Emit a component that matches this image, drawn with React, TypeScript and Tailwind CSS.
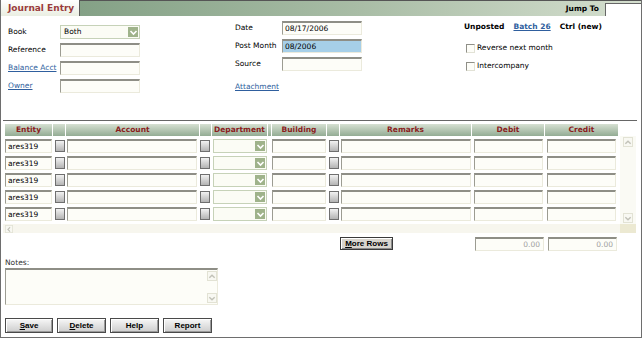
import React from "react";

const COLS = [48, 13, 134, 12, 56, 4, 55, 13, 132, 73, 73];
const HEADS = ["Entity", "", "Account", "", "Department", "", "Building", "", "Remarks", "Debit", "Credit"];

const boxCls =
  "h-[14px] border border-t-2 border-t-[#8e8e86] border-l-[#9c9c92] border-r-[#ebeadc] border-b-[#ebeadc] flex items-center pl-[2px] overflow-hidden whitespace-nowrap";

function Box({ className = "", bg = "bg-[#fdfdf8]", children }: { className?: string; bg?: string; children?: React.ReactNode }) {
  return <div className={`${boxCls} ${bg} ${className}`}>{children}</div>;
}

function Chevron({ dir = "down", color = "#ffffff" }: { dir?: "down" | "up" | "left" | "right"; color?: string }) {
  const pts = {
    down: "1.5,3 4.5,6 7.5,3",
    up: "1.5,6 4.5,3 7.5,6",
    left: "6,1.5 3,4.5 6,7.5",
    right: "3,1.5 6,4.5 3,7.5",
  }[dir];
  return (
    <svg width="9" height="9" viewBox="0 0 9 9">
      <polyline points={pts} fill="none" stroke={color} strokeWidth="1.6" />
    </svg>
  );
}

function Select({ className = "", value = "" }: { className?: string; value?: string }) {
  return (
    <div className={`h-[14px] flex border border-[#c6d2b8] bg-[#fbfcf5] ${className}`}>
      <div className="flex-1 flex items-center pl-[3px]">{value}</div>
      <div className="w-[10px] my-[1px] mr-[1px] bg-[#9fb38b] flex items-center justify-center">
        <Chevron />
      </div>
    </div>
  );
}

function SmallBtn({ className = "" }: { className?: string }) {
  return (
    <div
      className={`w-[10px] h-[12px] mt-[1px] border border-[#6f6f6f] bg-linear-to-b from-[#f2f2f2] to-[#b4b4b4] ${className}`}
    />
  );
}

function Check() {
  return <div className="w-[9px] h-[9px] ml-[2px] border border-t-[#8f8f88] border-l-[#8f8f88] border-r-[#e2e2d6] border-b-[#e2e2d6] bg-[#fdfdf8]" />;
}

function ScrollArrow({ dir }: { dir: "down" | "up" | "left" | "right" }) {
  return (
    <div className="w-[10px] h-[10px] border border-[#e2e2d4] bg-[#f8f8f2] flex items-center justify-center">
      <Chevron dir={dir} color="#c2c2b8" />
    </div>
  );
}

function Field({ label, link, w, children }: { label: string; link?: boolean; w: string; children: React.ReactNode }) {
  return (
    <div className="flex items-center h-[14px]">
      <div className={`${w} ${link ? "text-[#2f5f9e] underline" : ""}`}>{label}</div>
      {children}
    </div>
  );
}

function Button({ label, u, className = "" }: { label: string; u?: boolean; className?: string }) {
  return (
    <div
      className={`h-[15px] border border-[#4a4a4a] bg-linear-to-b from-[#f7f7f7] to-[#cdcdcd] shadow-[inset_1px_1px_0_#ffffff,inset_-1px_-1px_0_#9a9a9a] flex items-center justify-center font-['Liberation_Sans',sans-serif] font-bold text-[8px] ${className}`}
    >
      {u ? (
        <>
          <span className="underline">{label[0]}</span>
          {label.slice(1)}
        </>
      ) : (
        label
      )}
    </div>
  );
}

function Row() {
  return (
    <div className="flex h-[14px]">
      <div className="w-[48px]">
        <Box className="w-[47px]">ares319</Box>
      </div>
      <div className="w-[13px]">
        <SmallBtn className="ml-[2px]" />
      </div>
      <div className="w-[134px]">
        <Box className="w-[130px] ml-[1px]" />
      </div>
      <div className="w-[12px]">
        <SmallBtn />
      </div>
      <div className="w-[56px]">
        <Select className="w-[54px] ml-[1px]" />
      </div>
      <div className="w-[4px]" />
      <div className="w-[55px]">
        <Box className="w-[54px]" />
      </div>
      <div className="w-[13px]">
        <SmallBtn className="ml-[2px]" />
      </div>
      <div className="w-[132px]">
        <Box className="w-[130px] ml-[1px]" />
      </div>
      <div className="w-[73px]">
        <Box className="w-[69px] ml-[2px]" />
      </div>
      <div className="w-[73px]">
        <Box className="w-[69px] ml-[2px]" />
      </div>
    </div>
  );
}

export default function App() {
  return (
    <div className="w-[642px] h-[338px] bg-white border-l border-r border-b border-[#6e6e6e] flex flex-col font-['DejaVu_Sans',sans-serif] text-[7.5px] text-black leading-none overflow-hidden">
      {/* title bar */}
      <div className="flex h-[16px] shrink-0">
        <div className="w-[79px] bg-linear-to-b from-white to-[#eaeee2] border-r border-[#5c5c5c] flex items-center pl-[7px] text-[9px] font-bold text-[#9a3b3b]">
          Journal Entry
        </div>
        <div className="flex-1 flex items-center justify-end border-t border-[#555555] bg-linear-to-r from-[#84a186] via-[#a9bda6] to-[#d5dfcf]">
          <span className="font-bold mr-[6px]">Jump To</span>
          <div className="w-[36px] h-[13px] mt-[2px] bg-white border-l border-t border-[#666666]" />
        </div>
      </div>

      {/* form */}
      <div className="flex h-[104px] shrink-0">
        <div className="ml-[7px] pt-[9px] flex flex-col gap-[4px]">
          <Field label="Book" w="w-[52px]">
            <Select className="w-[80px]" value="Both" />
          </Field>
          <Field label="Reference" w="w-[52px]">
            <Box className="w-[80px]" />
          </Field>
          <Field label="Balance Acct" link w="w-[52px]">
            <Box className="w-[80px]" />
          </Field>
          <Field label="Owner" link w="w-[52px]">
            <Box className="w-[80px]" />
          </Field>
        </div>

        <div className="ml-[95px] pt-[5px] flex flex-col gap-[4px]">
          <Field label="Date" w="w-[47px]">
            <Box className="w-[80px]">08/17/2006</Box>
          </Field>
          <Field label="Post Month" w="w-[47px]">
            <Box className="w-[80px]" bg="bg-[#a6cfe8]">08/2006</Box>
          </Field>
          <Field label="Source" w="w-[47px]">
            <Box className="w-[80px]" />
          </Field>
          <div className="mt-[8px] text-[#2f5f9e] underline">Attachment</div>
        </div>

        <div className="ml-[102px] pt-[7px] flex flex-col">
          <div className="flex gap-[9px] font-bold">
            <span>Unposted</span>
            <span className="text-[#2f5f9e] underline">Batch 26</span>
            <span>Ctrl (new)</span>
          </div>
          <div className="flex items-center gap-[2px] mt-[13px]">
            <Check />
            <span>Reverse next month</span>
          </div>
          <div className="flex items-center gap-[2px] mt-[9px]">
            <Check />
            <span>Intercompany</span>
          </div>
        </div>
      </div>

      <div className="h-px w-[634px] ml-[2px] bg-[#666666] shrink-0" />

      {/* grid */}
      <div className="flex ml-[2px] mt-[3px] shrink-0">
        <div className="w-[617px] flex flex-col">
          <div className="flex pl-[2px] h-[12px]">
            {HEADS.map((h, i) => (
              <div
                key={i}
                style={{ width: COLS[i] }}
                className={`h-full bg-linear-to-b from-[#d6e0d2] to-[#93ac94] flex items-center justify-center font-bold text-[#8a1c1c] ${
                  i < HEADS.length - 1 ? "border-r border-white" : ""
                }`}
              >
                {h}
              </div>
            ))}
          </div>
          <div className="flex flex-col gap-[3px] pt-[3px] pl-[2px] h-[88px]">
            {[0, 1, 2, 3, 4].map((r) => (
              <Row key={r} />
            ))}
          </div>
          <div className="h-[9px] bg-[#f7f6ee] flex items-center pl-[1px]">
            <div className="scale-[0.8]">
              <ScrollArrow dir="left" />
            </div>
          </div>
        </div>
        <div className="w-[16px] flex flex-col">
          <div className="h-[12px]" />
          <div className="h-[88px] bg-[#fafaf4] flex flex-col items-center justify-between py-[1px]">
            <ScrollArrow dir="up" />
            <ScrollArrow dir="down" />
          </div>
          <div className="h-[9px] bg-[#ece9d2]" />
        </div>
      </div>

      {/* more rows + totals */}
      <div className="flex h-[13px] mt-[4px] shrink-0">
        <div className="ml-[339px] w-[53px] h-[13px] border border-[#3a3a3a] bg-[#d8d5ce] shadow-[inset_1px_1px_0_#ffffff,inset_-1px_-1px_0_#8a8a8a] flex items-center justify-center font-['Liberation_Sans',sans-serif] font-bold text-[8px]">
          <span className="underline">M</span>ore Rows
        </div>
        <Box className="ml-[82px] w-[69px] justify-end pr-[3px] text-[#a0a0a0]">0.00</Box>
        <Box className="ml-[4px] w-[69px] justify-end pr-[3px] text-[#a0a0a0]">0.00</Box>
      </div>

      {/* notes */}
      <div className="ml-[4px] mt-[9px] h-[8px] text-[#333333] shrink-0">Notes:</div>
      <div className="ml-[4px] mt-[1px] w-[213px] h-[37px] flex border border-t-2 border-t-[#8e8e86] border-l-[#9c9c92] border-r-[#ebeadc] border-b-[#ebeadc] bg-[#fdfdf8] shrink-0">
        <div className="flex-1" />
        <div className="w-[11px] flex flex-col justify-between items-center py-[1px]">
          <ScrollArrow dir="up" />
          <ScrollArrow dir="down" />
        </div>
      </div>

      {/* buttons */}
      <div className="flex gap-[4px] ml-[4px] mt-[13px] shrink-0">
        <Button label="Save" u className="w-[48px]" />
        <Button label="Delete" u className="w-[49px]" />
        <Button label="Help" className="w-[49px]" />
        <Button label="Report" className="w-[49px]" />
      </div>
    </div>
  );
}
